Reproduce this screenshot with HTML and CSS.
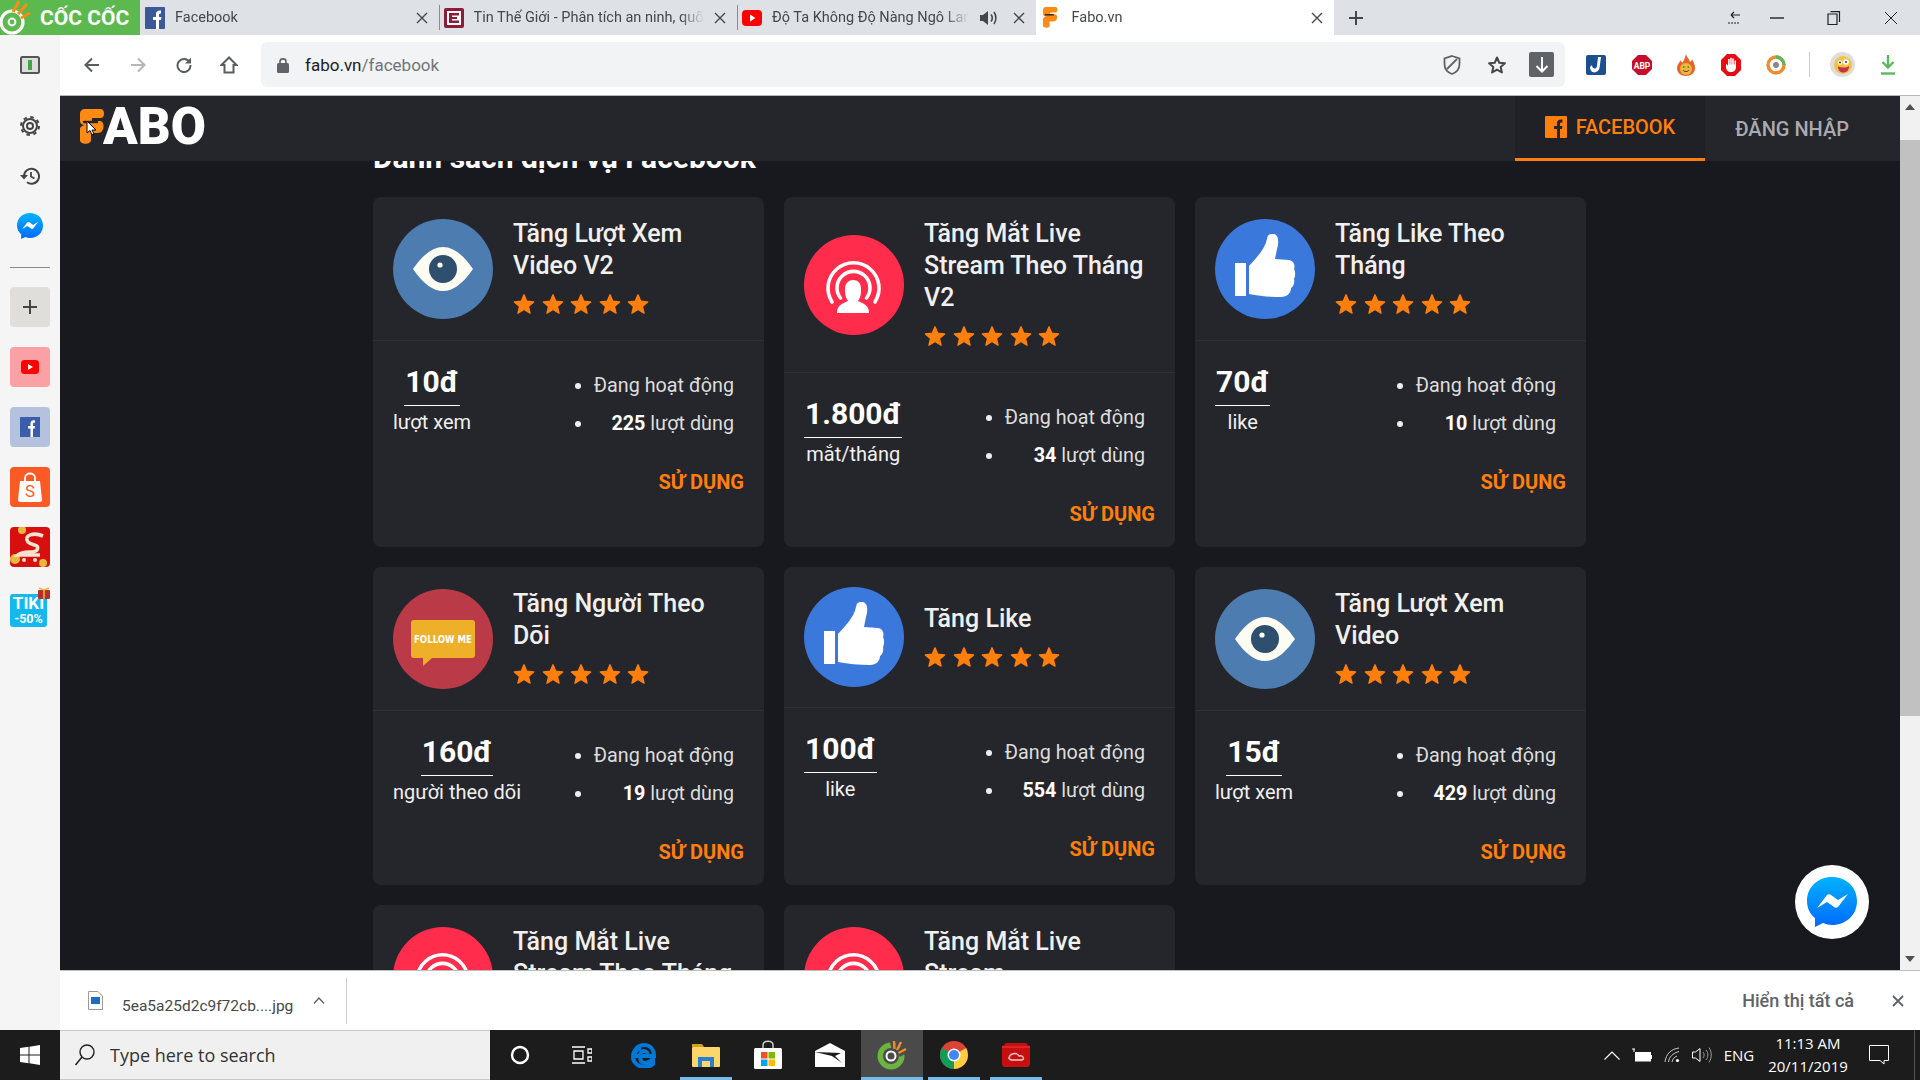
FILE: index.html
```html
<!DOCTYPE html>
<html lang="vi">
<head>
    <meta charset="UTF-8">
    <title>Fabo.vn</title>
    <link rel="stylesheet" href="styles.css">
</head>
<body>

<!-- shared icons -->
<svg class="defs" width="0" height="0">
    <defs>
        <linearGradient id="msgr-blue" x1="0" y1="0" x2="0" y2="1"><stop offset="0" stop-color="#00b2ff"/><stop offset="1" stop-color="#006aff"/></linearGradient>
    </defs>
    <symbol id="star" viewBox="0 0 24 24"><polygon points="12,2 15,9 22.5,9.7 16.8,14.6 18.6,22 12,18 5.4,22 7.2,14.6 1.5,9.7 9,9" fill="#ff7f0c" stroke="#ff7f0c" stroke-width="1.5" stroke-linejoin="round"/></symbol>
    <symbol id="eye" viewBox="0 0 100 100">
        <circle cx="50" cy="50" r="50" fill="#4d7cb1"/>
        <path d="M20 50Q35 28 50 28T80 50Q65 72 50 72T20 50Z" fill="#fdfcf2"/>
        <circle cx="50" cy="50" r="14" fill="#2e4f6e"/>
        <circle cx="47" cy="46" r="2.6" fill="#fff"/>
    </symbol>
    <symbol id="live" viewBox="0 0 100 100">
        <circle cx="50" cy="50" r="50" fill="#ff2d4b"/>
        <path d="M28 67A25.5 25.5 0 1 1 71 67M36.5 63A16.5 16.5 0 1 1 62.5 63" fill="none" stroke="#fff" stroke-width="3.6" stroke-linecap="round"/>
        <path d="M33 78C33 70 38 69 44 66C41 62 41 58 41 54C41 48 45 45 49 45C54 45 57 48 57 54C57 58 57 62 54 66C60 69 65 70 65 78Z" fill="#fff"/>
    </symbol>
    <symbol id="like" viewBox="0 0 100 100">
        <circle cx="50" cy="50" r="50" fill="#3b78db"/>
        <rect x="20" y="44" width="11" height="33" fill="#fff"/>
        <path d="M34 47C42 38 50 30 52 20C53 14 56 15 59 15C64 16 64 24 62 30L60 40L74 41C80 42 80 48 79 50C81 54 80 58 79 60C80 64 78 68 76 69C76 74 72 78 66 78C55 78 44 77 34 75Z" fill="#fff"/>
    </symbol>
    <symbol id="fabo-f" viewBox="0 0 25 35">
        <path d="M5 0H21C25 0 25 9 21 9H12V12H20C25 12 25 24 18 24H11V31C11 36 0 36 0 31V20C0 18 3 16 6 16C1 16 0 14 0 11V5C0 2 2 0 5 0Z" fill="#ff8a14"/>
        <path d="M3 13H18" stroke="#25262b" stroke-width="2.4"/>
    </symbol>
    <symbol id="close" viewBox="0 0 12 12"><path d="M1 1L11 11M11 1L1 11" stroke="#45474a" stroke-width="1.4" fill="none"/></symbol>
    <symbol id="msgr" viewBox="0 0 50 50">
        <path d="M25 0C11 0 0 10 0 24C0 31 3 37 8 41V50L16 46C19 47 22 48 25 48C39 48 50 38 50 24C50 10 39 0 25 0Z" fill="url(#msgr-blue)"/>
        <path d="M10 31L20 18C21 17 23 17 24 18L31 23L41 17L31 30C30 31 28 31 27 30L20 25Z" fill="#fff"/>
    </symbol>
</svg>

<div class="tabstrip">
    <div class="brand">
        <svg width="36" height="35" viewBox="0 0 36 35"><circle cx="12" cy="22" r="11" fill="none" stroke="#fff" stroke-width="3.2"/><circle cx="12" cy="22" r="3.400" fill="none" stroke="#fff" stroke-width="2"/><path d="M13 12L19 1M18 14L27 4M21 18L30 13" stroke="#ff8a14" stroke-width="3"/></svg>
        <span class="brand-name">CỐC CỐC</span>
    </div>
    <div class="tab">
        <svg class="favicon" width="20" height="22" viewBox="0 0 20 22"><rect width="20" height="22" rx="1" fill="#3b5998"/><path d="M11 22V13H8V10H11V7C11 4.500 13 3 16 3.500V6.500C14.500 6.300 14 6.800 14 8V10H16.500L16 13H14V22Z" fill="#fff"/></svg>
        <span class="tab-title">Facebook</span>
        <svg class="tab-x" width="12" height="12"><use href="#close"/></svg>
    </div>
    <div class="tab">
        <svg class="favicon" width="20" height="20" viewBox="0 0 20 20"><rect width="20" height="20" rx="2" fill="#8c1d35"/><rect x="3" y="3" width="14" height="14" fill="#fff"/><path d="M5 5H15V7.500H8V9H13V11H8V12.500H15V15H5Z" fill="#8c1d35"/></svg>
        <span class="tab-title">Tin Thế Giới - Phân tích an ninh, quốc phòng</span>
        <svg class="tab-x" width="12" height="12"><use href="#close"/></svg>
    </div>
    <div class="tab">
        <svg class="favicon" width="20" height="16" viewBox="0 0 20 16"><rect width="20" height="16" rx="4" fill="#f00"/><path d="M8 4.500L13.500 8L8 11.500Z" fill="#fff"/></svg>
        <span class="tab-title">Độ Ta Không Độ Nàng Ngô Lan Hương</span>
        <svg class="tab-sound" width="20" height="18" viewBox="0 0 20 18"><path d="M1 6H4L9 2V16L4 12H1Z" fill="#45474a"/><path d="M12 5.500C13.500 7.500 13.500 10.500 12 12.500M15 3C17.500 6.500 17.500 11.500 15 15" fill="none" stroke="#45474a" stroke-width="1.6"/></svg>
        <svg class="tab-x" width="12" height="12"><use href="#close"/></svg>
    </div>
    <div class="tab tab-active">
        <svg class="favicon" width="15" height="21"><use href="#fabo-f"/></svg>
        <span class="tab-title">Fabo.vn</span>
        <svg class="tab-x" width="12" height="12"><use href="#close"/></svg>
    </div>
    <svg class="tab-plus" width="14" height="14" viewBox="0 0 14 14"><path d="M7 0V14M0 7H14" stroke="#45474a" stroke-width="2"/></svg>
    <div class="win-btns">
        <span class="win-btn win-back"><svg width="14" height="14" viewBox="0 0 14 14"><path d="M4 4H13M4 4L7 1M4 4L7 7" fill="none" stroke="#222" stroke-width="1.2"/><path d="M1 12H13" stroke="#222" stroke-width="1.200" stroke-dasharray="2 1"/></svg></span>
        <span class="win-btn win-min"><svg width="14" height="2"><path d="M0 1H14" stroke="#222" stroke-width="1.400"/></svg></span>
        <span class="win-btn win-max"><svg width="14" height="14" viewBox="0 0 14 14"><path d="M3.500 .7H12.500V11M1 3H10V13.500H1Z" fill="none" stroke="#222" stroke-width="1.200"/></svg></span>
        <span class="win-btn win-close"><svg width="14" height="14" viewBox="0 0 14 14"><path d="M1 1L13 13M13 1L1 13" stroke="#222" stroke-width="1"/></svg></span>
    </div>
</div>

<div class="window">
    <aside class="sidebar">
        <div class="side-toggle"><svg width="20" height="18" viewBox="0 0 20 18"><rect x="1" y="1" width="18" height="16" rx="1.500" fill="#ddd" stroke="#555" stroke-width="2"/><rect x="8" y="4" width="4" height="10" fill="#3fa73f"/></svg></div>
        <div class="side-tool"><svg width="20" height="20" viewBox="0 0 20 20"><circle cx="10" cy="10" r="3" fill="none" stroke="#444" stroke-width="2"/><circle cx="10" cy="10" r="7" fill="none" stroke="#444" stroke-width="2"/><circle cx="10" cy="10" r="9" fill="none" stroke="#444" stroke-width="2" stroke-dasharray="3.500 3.570"/></svg></div>
        <div class="side-tool"><svg width="20" height="18" viewBox="0 0 20 18"><path d="M4 9A7.500 7.500 0 1 1 7 15.300" fill="none" stroke="#444" stroke-width="2"/><path d="M0 8H8L4 12.500Z" fill="#444"/><path d="M11 5V9.500L14.500 11.500" fill="none" stroke="#444" stroke-width="1.800"/></svg></div>
        <div class="side-tool"><svg width="26" height="26"><use href="#msgr"/></svg></div>
        <div class="side-line"></div>
        <div class="side-app side-add"><svg width="16" height="16" viewBox="0 0 16 16"><path d="M8 1V15M1 8H15" stroke="#444" stroke-width="2"/></svg></div>
        <div class="side-app side-yt"><svg width="18" height="14" viewBox="0 0 18 14"><rect width="18" height="14" rx="3.500" fill="#f00"/><path d="M7 4L12 7L7 10Z" fill="#fff"/></svg></div>
        <div class="side-app side-fb"><svg width="20" height="20" viewBox="0 0 20 20"><rect width="20" height="20" fill="#3b5eaa"/><path d="M10.500 20V11.500H8V9H10.500V6.500C10.500 4 12.500 3 15 3.400V5.700C13.500 5.500 13 6 13 7V9H15L14.700 11.500H13V20Z" fill="#fff"/></svg></div>
        <div class="side-app side-shopee"><svg width="26" height="30" viewBox="0 0 26 30"><path d="M3 9H23L25 28C25 29 24 30 23 30H3C2 30 1 29 1 28Z" fill="#fff"/><path d="M8 9V6C8 0 18 0 18 6V9" fill="none" stroke="#fff" stroke-width="1.800"/><text x="13" y="25" class="shopee-s">S</text></svg></div>
        <div class="side-app side-sendo"><svg width="40" height="40" viewBox="0 0 40 40"><circle cx="12" cy="3" r="4" fill="#e8b93c"/><circle cx="5" cy="32" r="5" fill="#e8b93c"/><circle cx="33" cy="36" r="4" fill="#e8b93c"/><path d="M33 9C24 5 13 8 18 15C22 19 30 17 27 23C24 27 14 23 8 28H30" fill="none" stroke="#f6e3cf" stroke-width="3.600"/><circle cx="14" cy="33" r="2" fill="#f6e3cf"/><circle cx="25" cy="33" r="2" fill="#f6e3cf"/></svg></div>
        <div class="side-app side-tiki">
            <div class="tiki-box">TIKI<small>-50%</small></div>
            <svg class="tiki-gift" width="12" height="12" viewBox="0 0 12 12"><rect y="3" width="12" height="9" rx="1" fill="#b92c2c"/><path d="M6 3V12M1 1L6 3L11 1" fill="none" stroke="#e8b93c" stroke-width="1.600"/></svg>
        </div>
    </aside>

    <div class="browser">
        <div class="toolbar">
            <svg class="nav-ico" width="16" height="16" viewBox="0 0 16 16"><path d="M15 8H2M8 1.500L1.500 8L8 14.500" fill="none" stroke="#5a5c60" stroke-width="2"/></svg>
            <svg class="nav-ico nav-fwd" width="16" height="16" viewBox="0 0 16 16"><path d="M1 8H14M8 1.500L14.500 8L8 14.500" fill="none" stroke="#b4b6b9" stroke-width="2"/></svg>
            <svg class="nav-ico nav-reload" width="16" height="16" viewBox="0 0 16 16"><path d="M13.500 5A6.500 6.500 0 1 0 14.500 8" fill="none" stroke="#5a5c60" stroke-width="2"/><path d="M15 .500V6.500H9Z" fill="#5a5c60"/></svg>
            <svg class="nav-ico nav-home" width="18" height="18" viewBox="0 0 18 18"><path d="M9 1.500L1.500 9H4.500V16.500H13.500V9H16.500Z" fill="none" stroke="#5a5c60" stroke-width="2"/></svg>
            <div class="omnibox">
                <svg width="12" height="16" viewBox="0 0 12 16"><path d="M3 7V4.500C3 1 9 1 9 4.500V7" fill="none" stroke="#5f6368" stroke-width="1.600"/><rect y="6" width="12" height="10" rx="1.500" fill="#5f6368"/></svg>
                <span class="url">fabo.vn<span class="url-path">/facebook</span></span>
                <span class="omni-end">
                    <svg width="18" height="20" viewBox="0 0 18 20"><path d="M9 1L16.500 3.500V9C16.500 14 13 17.500 9 19C5 17.500 1.500 14 1.500 9V3.500Z" fill="none" stroke="#5f6368" stroke-width="1.800"/><path d="M4 14L14 4" stroke="#5f6368" stroke-width="1.800"/></svg>
                    <svg width="20" height="20" viewBox="0 0 24 24"><polygon points="12,3 14.700,9.300 21.500,9.900 16.400,14.400 17.900,21 12,17.500 6.100,21 7.600,14.400 2.500,9.900 9.300,9.300" fill="none" stroke="#45474a" stroke-width="2.400" stroke-linejoin="round"/></svg>
                    <span class="omni-dl"><svg width="14" height="16" viewBox="0 0 14 16"><path d="M7 0V14M1.500 9L7 14.500L12.500 9" fill="none" stroke="#fff" stroke-width="2"/></svg></span>
                </span>
            </div>
            <div class="extensions">
                <svg width="20" height="20" viewBox="0 0 20 20"><rect width="20" height="20" rx="2" fill="#1c4f8f"/><path d="M12 2L11 11C10 15 6 14 6 10L4 12C4 19 12 19 13.500 13L15 2Z" fill="#fff"/></svg>
                <svg width="20" height="20" viewBox="0 0 20 20"><polygon points="6,0 14,0 20,6 20,14 14,20 6,20 0,14 0,6" fill="#c70d2c"/><text x="10" y="13.500" class="abp">ABP</text></svg>
                <svg width="18" height="22" viewBox="0 0 18 22"><path d="M9 0C10 4 12 4 13 8C15 6 15 6 15 5C17 9 18 11 18 14C18 19 14 22 9 22C4 22 0 19 0 14C0 11 2 9 4 6C4 8 5 9 6 8C7 6 8 3 9 0Z" fill="#e8632a"/><circle cx="9" cy="15" r="6" fill="#e8b93c"/><path d="M6 16C7 18 11 18 12 16" fill="none" stroke="#533" stroke-width="1"/><path d="M6 13H7.500M10.500 13H12" stroke="#533" stroke-width="1.200"/></svg>
                <svg width="20" height="22" viewBox="0 0 20 22"><polygon points="6,0 14,0 20,6 20,16 14,22 6,22 0,16 0,6" fill="#e60d12"/><path d="M5 10V13C5 16 7 18 10 18C13 18 15 16 15 13V6.500H13.500V10.500H12.800V4.500H11.200V10.500H10.700V3.700H9.200V10.500H8.700V5H7.100V12L5.500 10Z" fill="#fff"/></svg>
                <svg width="20" height="20" viewBox="0 0 20 20"><circle cx="10" cy="10" r="8" fill="none" stroke="#f28c28" stroke-width="3.400"/><path d="M10 2A8 8 0 0 1 18 10" fill="none" stroke="#5cb85c" stroke-width="3.400"/><circle cx="10" cy="10" r="3" fill="#888"/></svg>
                <span class="ext-sep"></span>
                <span class="ext-face"><svg width="18" height="18" viewBox="0 0 18 18"><circle cx="9" cy="9" r="9" fill="#f3c443"/><circle cx="6" cy="6.500" r="2.200" fill="#fff"/><circle cx="12" cy="6" r="2.800" fill="#fff"/><circle cx="6" cy="6.500" r="1" fill="#333"/><circle cx="12" cy="6" r="1" fill="#333"/><path d="M4 10.500C8 12 12 12 15 10C15 15 12 16.500 9 16.500C6 16.500 4 14 4 10.500Z" fill="#c4314b"/></svg></span>
                <svg class="ext-dl" width="14" height="20" viewBox="0 0 14 20"><path d="M7 0V12M1.500 7L7 12.500L12.500 7" fill="none" stroke="#5cb85c" stroke-width="2.400"/><path d="M0 18.500H14" stroke="#5cb85c" stroke-width="2.400"/></svg>
            </div>
        </div>

        <div class="viewport">
            <div class="page">
                <header class="site-header">
                    <a class="logo"><svg width="25" height="35"><use href="#fabo-f"/></svg><span>ABO</span></a>
                    <nav class="site-nav">
                        <a class="nav-item nav-active"><svg width="22" height="22" viewBox="0 0 22 22"><rect width="22" height="22" rx="1" fill="#ff7f0c"/><path d="M12 22V13H9V10H12V7C12 4.500 14 3 17.500 3.500V6.500C15.500 6.300 15 6.800 15 8V10H17.500L17 13H15V22Z" fill="#25262b"/></svg>FACEBOOK</a>
                        <a class="nav-item">ĐĂNG NHẬP</a>
                    </nav>
                </header>
                <main class="content">
                    <h1 class="heading">Danh sách dịch vụ Facebook</h1>
                    <div class="grid">

                        <article class="card">
                            <div class="card-top">
                                <svg class="card-ico"><use href="#eye"/></svg>
                                <div>
                                    <h3 class="card-title">Tăng Lượt Xem Video V2</h3>
                                    <div class="stars"><svg><use href="#star"/></svg><svg><use href="#star"/></svg><svg><use href="#star"/></svg><svg><use href="#star"/></svg><svg><use href="#star"/></svg></div>
                                </div>
                            </div>
                            <div class="card-body">
                                <div class="card-info">
                                    <div class="price"><b>10đ</b><span>lượt xem</span></div>
                                    <ul class="stats"><li><span>Đang hoạt động</span></li><li><span><b>225</b> lượt dùng</span></li></ul>
                                </div>
                                <a class="use-btn">SỬ DỤNG</a>
                            </div>
                        </article>

                        <article class="card">
                            <div class="card-top">
                                <svg class="card-ico"><use href="#live"/></svg>
                                <div>
                                    <h3 class="card-title">Tăng Mắt Live Stream Theo Tháng V2</h3>
                                    <div class="stars"><svg><use href="#star"/></svg><svg><use href="#star"/></svg><svg><use href="#star"/></svg><svg><use href="#star"/></svg><svg><use href="#star"/></svg></div>
                                </div>
                            </div>
                            <div class="card-body">
                                <div class="card-info">
                                    <div class="price"><b>1.800đ</b><span>mắt/tháng</span></div>
                                    <ul class="stats"><li><span>Đang hoạt động</span></li><li><span><b>34</b> lượt dùng</span></li></ul>
                                </div>
                                <a class="use-btn">SỬ DỤNG</a>
                            </div>
                        </article>

                        <article class="card">
                            <div class="card-top">
                                <svg class="card-ico"><use href="#like"/></svg>
                                <div>
                                    <h3 class="card-title">Tăng Like Theo Tháng</h3>
                                    <div class="stars"><svg><use href="#star"/></svg><svg><use href="#star"/></svg><svg><use href="#star"/></svg><svg><use href="#star"/></svg><svg><use href="#star"/></svg></div>
                                </div>
                            </div>
                            <div class="card-body">
                                <div class="card-info">
                                    <div class="price"><b>70đ</b><span>like</span></div>
                                    <ul class="stats"><li><span>Đang hoạt động</span></li><li><span><b>10</b> lượt dùng</span></li></ul>
                                </div>
                                <a class="use-btn">SỬ DỤNG</a>
                            </div>
                        </article>

                        <article class="card">
                            <div class="card-top">
                                <svg class="card-ico" viewBox="0 0 100 100">
                                    <circle cx="50" cy="50" r="50" fill="#bb3a48"/>
                                    <path d="M21 31H79C81 31 82 32 82 34V66C82 68 81 69 79 69H39L30 77V69H21C19 69 18 68 18 66V34C18 32 19 31 21 31Z" fill="#eeb029"/>
                                    <text x="50" y="54" class="follow-me" textLength="58" lengthAdjust="spacingAndGlyphs">FOLLOW ME</text>
                                </svg>
                                <div>
                                    <h3 class="card-title">Tăng Người Theo Dõi</h3>
                                    <div class="stars"><svg><use href="#star"/></svg><svg><use href="#star"/></svg><svg><use href="#star"/></svg><svg><use href="#star"/></svg><svg><use href="#star"/></svg></div>
                                </div>
                            </div>
                            <div class="card-body">
                                <div class="card-info">
                                    <div class="price"><b>160đ</b><span>người theo dõi</span></div>
                                    <ul class="stats"><li><span>Đang hoạt động</span></li><li><span><b>19</b> lượt dùng</span></li></ul>
                                </div>
                                <a class="use-btn">SỬ DỤNG</a>
                            </div>
                        </article>

                        <article class="card">
                            <div class="card-top">
                                <svg class="card-ico"><use href="#like"/></svg>
                                <div>
                                    <h3 class="card-title">Tăng Like</h3>
                                    <div class="stars"><svg><use href="#star"/></svg><svg><use href="#star"/></svg><svg><use href="#star"/></svg><svg><use href="#star"/></svg><svg><use href="#star"/></svg></div>
                                </div>
                            </div>
                            <div class="card-body">
                                <div class="card-info">
                                    <div class="price"><b>100đ</b><span>like</span></div>
                                    <ul class="stats"><li><span>Đang hoạt động</span></li><li><span><b>554</b> lượt dùng</span></li></ul>
                                </div>
                                <a class="use-btn">SỬ DỤNG</a>
                            </div>
                        </article>

                        <article class="card">
                            <div class="card-top">
                                <svg class="card-ico"><use href="#eye"/></svg>
                                <div>
                                    <h3 class="card-title">Tăng Lượt Xem Video</h3>
                                    <div class="stars"><svg><use href="#star"/></svg><svg><use href="#star"/></svg><svg><use href="#star"/></svg><svg><use href="#star"/></svg><svg><use href="#star"/></svg></div>
                                </div>
                            </div>
                            <div class="card-body">
                                <div class="card-info">
                                    <div class="price"><b>15đ</b><span>lượt xem</span></div>
                                    <ul class="stats"><li><span>Đang hoạt động</span></li><li><span><b>429</b> lượt dùng</span></li></ul>
                                </div>
                                <a class="use-btn">SỬ DỤNG</a>
                            </div>
                        </article>

                        <article class="card">
                            <div class="card-top">
                                <svg class="card-ico"><use href="#live"/></svg>
                                <div>
                                    <h3 class="card-title">Tăng Mắt Live Stream Theo Tháng</h3>
                                    <div class="stars"><svg><use href="#star"/></svg><svg><use href="#star"/></svg><svg><use href="#star"/></svg><svg><use href="#star"/></svg><svg><use href="#star"/></svg></div>
                                </div>
                            </div>
                        </article>

                        <article class="card">
                            <div class="card-top">
                                <svg class="card-ico"><use href="#live"/></svg>
                                <div>
                                    <h3 class="card-title">Tăng Mắt Live Stream</h3>
                                    <div class="stars"><svg><use href="#star"/></svg><svg><use href="#star"/></svg><svg><use href="#star"/></svg><svg><use href="#star"/></svg><svg><use href="#star"/></svg></div>
                                </div>
                            </div>
                        </article>

                    </div>
                </main>
            </div>
            <div class="scrollbar">
                <span class="sb-btn"><i class="sb-up"></i></span>
                <span class="sb-thumb"></span>
                <span class="sb-btn sb-end"><i class="sb-down"></i></span>
            </div>
            <a class="chat-btn"><svg width="50" height="50"><use href="#msgr"/></svg></a>
            <svg class="cursor" width="12" height="16" viewBox="0 0 12 16"><path d="M1 1V13L4 10.500L6 15L8 14L6 10H10Z" fill="#fff" stroke="#000"/></svg>
        </div>

        <div class="download-bar">
            <svg width="15" height="19" viewBox="0 0 15 19"><path d="M.5 .5H10L14.500 5V18.500H.5Z" fill="#fff" stroke="#999"/><rect x="3" y="6" width="9" height="7" fill="#1b6fc2"/></svg>
            <span class="dl-name">5ea5a25d2c9f72cb....jpg</span>
            <svg class="dl-caret" width="12" height="7" viewBox="0 0 12 7"><path d="M1 6.500L6 1L11 6.500" fill="none" stroke="#5f6368" stroke-width="1.400"/></svg>
            <span class="dl-sep"></span>
            <span class="dl-all">Hiển thị tất cả</span>
            <svg class="dl-close" width="12" height="12" viewBox="0 0 12 12"><path d="M1 1L11 11M11 1L1 11" stroke="#5f6368" stroke-width="1.800"/></svg>
        </div>
    </div>
</div>

<footer class="taskbar">
    <div class="start"><svg width="20" height="20" viewBox="0 0 20 20"><path d="M0 3L8.500 1.800V9.500H0ZM9.500 1.700L20 0V9.500H9.500ZM0 10.500H8.500V18.200L0 17ZM9.500 10.500H20V20L9.500 18.300Z" fill="#fff"/></svg></div>
    <div class="search">
        <svg width="22" height="24" viewBox="0 0 22 24"><circle cx="13" cy="9" r="7" fill="none" stroke="#222" stroke-width="1.400"/><path d="M8 14L1.500 22" stroke="#222" stroke-width="1.600"/></svg>
        <span>Type here to search</span>
    </div>
    <div class="task-items">
        <div class="task"><svg width="20" height="20" viewBox="0 0 20 20"><circle cx="10" cy="10" r="8" fill="none" stroke="#fff" stroke-width="2.400"/></svg></div>
        <div class="task"><svg width="20" height="20" viewBox="0 0 20 20"><path d="M0 2H13M0 18H13M2 6H11V14H2ZM16 4H20V8H16ZM16 12H20V16H16Z" fill="none" stroke="#fff" stroke-width="1.300"/></svg></div>
        <div class="task"><svg width="26" height="26" viewBox="0 0 26 26"><path d="M3 16C3 10 6 7 10 6M4 14H23C23 7 19 3 13 3C7 3 2 8 2 15C2 21 8 25 13 25C17 25 20 24 22 22V17C19 20 16 21 14 21C11 21 9 19 9 14M9 14C9 11 11 9 13 9C15 9 17 11 17 14" fill="none" stroke="#0078d7" stroke-width="4"/></svg></div>
        <div class="task task-open"><svg width="28" height="26" viewBox="0 0 28 26"><path d="M0 2H10L12 5H0Z" fill="#d99e1d"/><rect y="5" width="28" height="20" rx="1" fill="#fcd669"/><path d="M6 25V15H22V25H18V19H10V25Z" fill="#2a7fd5"/></svg></div>
        <div class="task"><svg width="30" height="30" viewBox="0 0 30 30"><path d="M10 8V5C10 0 20 0 20 5V8" fill="none" stroke="#ccc" stroke-width="1.500"/><rect x="1" y="8" width="28" height="21" rx="1.500" fill="#fff"/><rect x="8" y="12" width="6.500" height="6.500" fill="#f25022"/><rect x="15.500" y="12" width="6.500" height="6.500" fill="#7fba00"/><rect x="8" y="19.500" width="6.500" height="6.500" fill="#00a4ef"/><rect x="15.500" y="19.500" width="6.500" height="6.500" fill="#ffb900"/></svg></div>
        <div class="task"><svg width="30" height="24" viewBox="0 0 30 24"><path d="M0 8L15 0L30 8V24H0Z" fill="#fff"/><path d="M0 9L26 10L20 13L27 20L17 13Z" fill="#1b1b1b"/></svg></div>
        <div class="task task-open task-active"><svg width="30" height="30" viewBox="0 0 30 30"><circle cx="14" cy="16" r="13.500" fill="#6cb33f"/><circle cx="14" cy="16" r="8" fill="#4a4a4a"/><circle cx="14" cy="16" r="4.500" fill="none" stroke="#fff" stroke-width="2"/><path d="M15 2L17 10M21 1L19 10M29 5L20 12M29 11L22 15" stroke="#4a4a4a" stroke-width="4"/><path d="M17 1L17.500 9M24 2L20 10M29 9L21.500 13" stroke="#f28c28" stroke-width="2.400"/></svg></div>
        <div class="task task-open"><svg width="28" height="28" viewBox="0 0 28 28"><circle cx="14" cy="14" r="14" fill="#db4437"/><path d="M14 14L26.100 7A14 14 0 0 1 14 28Z" fill="#ffcd40"/><path d="M14 14L14 28A14 14 0 0 1 1.900 7Z" fill="#0f9d58"/><circle cx="14" cy="14" r="6.500" fill="#fff"/><circle cx="14" cy="14" r="5" fill="#4285f4"/></svg></div>
        <div class="task task-open"><svg width="28" height="24" viewBox="0 0 28 24"><path d="M4 0H24L28 4V22L26 24H2L0 22V4Z" fill="#c80f10"/><path d="M0 4H28" stroke="#e52e2e" stroke-width="1.500"/><path d="M7 16C7 10 15 9 17 13C21 12 23 16 20 17H10C8 17 7 16 7 14" fill="none" stroke="#f4c9c9" stroke-width="1.400"/></svg></div>
    </div>
    <div class="tray">
        <span class="tray-ico"><svg width="16" height="9" viewBox="0 0 16 9"><path d="M.5 8.500L8 1L15.500 8.500" fill="none" stroke="#fff" stroke-width="1.200"/></svg></span>
        <span class="tray-ico"><svg width="20" height="14" viewBox="0 0 20 14"><path d="M0 1H3M2 1V4" stroke="#fff"/><rect x="3" y="4" width="16" height="9.500" fill="#fff"/><rect x="19" y="7" width="1" height="4" fill="#fff"/></svg></span>
        <span class="tray-ico"><svg width="16" height="16" viewBox="0 0 16 16"><circle cx="13.500" cy="13.500" r="1.600" fill="#fff"/><path d="M1 15C2 7 7 2 15 1M4.500 15C5 10 9 6 15 4.500M8 15C8.500 12 10.500 10 13 9" fill="none" stroke="#ccc" stroke-width="1"/></svg></span>
        <span class="tray-ico"><svg width="20" height="16" viewBox="0 0 20 16"><path d="M.5 5H3.500L8 1.500V14.500L3.500 11H.5Z" fill="none" stroke="#fff"/><path d="M11 5C12.500 7 12.500 9 11 11M14 3C16.500 6 16.500 10 14 13M17 .5C20 5 20 11 17 15.500" fill="none" stroke="#999"/></svg></span>
        <span class="tray-lang">ENG</span>
        <span class="tray-clock"><span>11:13 AM</span><span>20/11/2019</span></span>
        <span class="tray-notif"><svg width="20" height="20" viewBox="0 0 20 20"><path d="M.5 .5H19.500V15.500H15V19L11 15.500H.5Z" fill="none" stroke="#fff"/></svg></span>
        <span class="show-desktop"></span>
    </div>
</footer>

</body>
</html>
```

FILE: styles.css
```css
* {
    margin: 0;
    padding: 0;
    box-sizing: border-box;
}
html, body {
    width: 1920px;
    height: 1080px;
    overflow: hidden;
}
body {
    display: flex;
    flex-direction: column;
    font-family: Roboto, "Liberation Sans", sans-serif;
    background: #fff;
}
.defs {
    position: absolute;
}
svg {
    display: block;
    flex: none;
}

/* tab strip */
.tabstrip {
    height: 35px;
    display: flex;
    align-items: center;
    background: #dee1e6;
    font-size: 14.5px;
    color: #45474a;
}
.brand {
    width: 140px;
    height: 35px;
    display: flex;
    align-items: center;
    gap: 4px;
    background: #5cb94f;
}
.brand-name {
    color: #fff;
    font-size: 21px;
    font-weight: 700;
    white-space: nowrap;
}
.tab {
    width: 298.5px;
    height: 35px;
    display: flex;
    align-items: center;
    gap: 10px;
    padding: 0 11px 0 5px;
    position: relative;
}
.tab + .tab::before {
    content: "";
    position: absolute;
    left: 0;
    top: 5px;
    bottom: 5px;
    width: 1px;
    background: #8a8c90;
}
.tab-active + .tab::before,
.tab-active::before {
    display: none;
}
.tab-active {
    background: #fff;
    padding-left: 7px;
    gap: 14px;
}
.tab-title {
    flex: 1;
    min-width: 0;
    white-space: nowrap;
    overflow: hidden;
    -webkit-mask-image: linear-gradient(to left, transparent, #000 24px);
    mask-image: linear-gradient(to left, transparent, #000 24px);
}
.tab-sound {
    margin-right: 4px;
}
.tab-plus {
    margin-left: 15px;
}
.win-btns {
    margin-left: auto;
    display: flex;
    height: 35px;
}
.win-btn {
    display: flex;
    align-items: center;
    justify-content: center;
}
.win-back { width: 30px; }
.win-min { width: 56px; }
.win-max { width: 57px; }
.win-close { width: 58px; }

/* window */
.window {
    flex: 1;
    min-height: 0;
    display: flex;
}
.sidebar {
    width: 60px;
    flex: none;
    display: flex;
    flex-direction: column;
    align-items: center;
    background: #f5f5f5;
}
.side-toggle {
    height: 60px;
    margin-bottom: 6px;
    display: flex;
    align-items: center;
}
.side-tool {
    height: 50px;
    display: flex;
    align-items: center;
}
.side-line {
    width: 40px;
    height: 1px;
    background: #8a8a8a;
    margin: 16px 0 19px;
}
.side-app {
    width: 40px;
    height: 40px;
    margin-bottom: 20px;
    border-radius: 4px;
    display: flex;
    align-items: center;
    justify-content: center;
    overflow: hidden;
    position: relative;
}
.side-add { background: #dfdedb; }
.side-yt { background: #fba0a5; }
.side-fb { background: #b4c2dd; }
.side-shopee { background: #fb5a25; }
.side-sendo { background: #d80f0f; }
.side-tiki {
    overflow: visible;
    display: block;
}
.tiki-box {
    width: 37px;
    height: 33px;
    margin-top: 7px;
    border-radius: 3px;
    background: #14b8ee;
    color: #fff;
    font-size: 17px;
    line-height: 17px;
    font-weight: 700;
    text-align: center;
    padding-top: 1px;
}
.tiki-box small {
    display: block;
    font-size: 12.5px;
    line-height: 13px;
}
.tiki-gift {
    position: absolute;
    right: 0;
    top: 0;
}
.shopee-s {
    fill: #fb5a25;
    font-size: 17px;
    text-anchor: middle;
}

.browser {
    flex: 1;
    min-width: 0;
    display: flex;
    flex-direction: column;
}

/* toolbar */
.toolbar {
    height: 61px;
    flex: none;
    display: flex;
    align-items: center;
    background: #fff;
    border-bottom: 1px solid #b8b8b8;
    padding: 0 0 1px 24px;
}
.nav-ico { margin-right: 30px; }
.nav-reload { margin-right: 28px; }
.nav-home { margin-right: 23px; }
.omnibox {
    width: 1304px;
    height: 45px;
    flex: none;
    display: flex;
    align-items: center;
    gap: 16px;
    padding-left: 16px;
    background: #f1f3f4;
    border-radius: 6px;
}
.url {
    font-size: 17px;
    color: #202124;
}
.url-path {
    color: #70757a;
}
.omni-end {
    margin-left: auto;
    display: flex;
    align-items: center;
    gap: 26px;
    padding-right: 10px;
}
.omni-dl {
    width: 25px;
    height: 25px;
    margin-left: -4px;
    margin-right: 1px;
    border-radius: 2px;
    background: #5f6368;
    display: flex;
    align-items: center;
    justify-content: center;
}
.extensions {
    flex: 1;
    display: flex;
    align-items: center;
    padding-left: 21px;
    gap: 25.5px;
}
.abp {
    fill: #fff;
    font-size: 8.5px;
    font-weight: 700;
    text-anchor: middle;
}
.ext-sep {
    width: 1px;
    height: 25px;
    background: #ccc;
    margin-left: -3px;
}
.ext-face {
    width: 25px;
    height: 25px;
    margin: 0 -2px 0 -5px;
    border-radius: 50%;
    background: #ddd;
    display: flex;
    align-items: center;
    justify-content: center;
}
.ext-dl {
    margin-left: 2px;
}

/* page */
.viewport {
    flex: 1;
    min-height: 0;
    display: flex;
    position: relative;
}
.page {
    flex: 1;
    min-width: 0;
    display: flex;
    flex-direction: column;
    background: #18191e;
}
.site-header {
    height: 65px;
    flex: none;
    display: flex;
    align-items: center;
    background: #25262b;
    padding: 0 21px 0 20px;
    position: relative;
}
.logo {
    display: flex;
    align-items: center;
    margin-bottom: 4px;
    color: #fff;
    font-size: 51px;
    font-weight: 900;
    line-height: 1;
}
.logo span {
    margin-left: -2px;
}
.site-nav {
    margin-left: auto;
    display: flex;
    height: 65px;
}
.nav-item {
    display: flex;
    align-items: center;
    gap: 9px;
    padding: 0 30px;
    font-size: 20px;
    font-weight: 500;
    color: #a9abb0;
}
.nav-active {
    color: #ff7f0c;
    background: #202126;
    border-bottom: 3px solid #ff7f0c;
}
.content {
    flex: 1;
    min-height: 0;
    overflow: hidden;
    padding-left: 313px;
}
.heading {
    margin-top: -23px;
    margin-bottom: 19px;
    font-size: 30px;
    line-height: 40px;
    font-weight: 700;
    color: #fff;
}
.grid {
    display: grid;
    grid-template-columns: repeat(3, 391px);
    gap: 20px;
}
.card {
    background: #25262b;
    border-radius: 8px;
    color: #fff;
}
.card-top {
    display: flex;
    align-items: center;
    gap: 20px;
    padding: 20px;
    border-bottom: 1px solid #2f3036;
}
.card-ico {
    width: 100px;
    height: 100px;
}
.card-title {
    padding-top: 1px;
    font-size: 25px;
    line-height: 32px;
    font-weight: 500;
    color: #f0f0f0;
}
.stars {
    display: flex;
    gap: 6.6px;
    margin: 11px 0 5px;
}
.stars svg {
    width: 22px;
    height: 22px;
}
.follow-me {
    fill: #fff;
    font-size: 11px;
    font-weight: 700;
    text-anchor: middle;
    font-family: "DejaVu Sans", sans-serif;
}
.card-body {
    padding: 20px 20px 21px;
}
.card-info {
    display: flex;
    justify-content: space-between;
    padding-right: 10px;
}
.price {
    display: flex;
    flex-direction: column;
    align-items: center;
    font-size: 20px;
}
.price b {
    font-size: 30px;
    line-height: 42px;
    padding: 0 1px 2px;
    border-bottom: 1px solid #fff;
    margin-bottom: 4px;
}
.price span {
    line-height: 24px;
    color: #f0f0f0;
}
.stats {
    list-style: none;
    width: 159px;
    margin: 6px 0 0;
    font-size: 19.75px;
    line-height: 38px;
    color: #ddd;
}
.stats li {
    display: flex;
    align-items: center;
    justify-content: space-between;
}
.stats li::before {
    content: "";
    width: 6px;
    height: 6px;
    border-radius: 50%;
    background: #eee;
}
.stats b {
    color: #fff;
}
.use-btn {
    display: block;
    margin-top: 27px;
    text-align: right;
    font-size: 20px;
    line-height: 24px;
    font-weight: 700;
    color: #ff7f0c;
}

/* scrollbar */
.scrollbar {
    width: 20px;
    flex: none;
    display: flex;
    flex-direction: column;
    background: #f1f1f1;
}
.sb-btn {
    height: 22px;
    flex: none;
    display: flex;
    align-items: center;
    justify-content: center;
}
.sb-up, .sb-down {
    width: 0;
    height: 0;
    border-left: 5px solid transparent;
    border-right: 5px solid transparent;
}
.sb-up { border-bottom: 6px solid #505050; }
.sb-down { border-top: 6px solid #505050; }
.sb-thumb {
    height: 576px;
    margin-top: 22px;
    background: #c1c1c1;
}
.sb-end {
    margin-top: auto;
}
.chat-btn {
    position: absolute;
    right: 51px;
    bottom: 31px;
    width: 74px;
    height: 74px;
    border-radius: 50%;
    background: #fff;
    display: flex;
    align-items: center;
    justify-content: center;
}
.cursor {
    position: absolute;
    left: 26px;
    top: 24px;
}

/* download bar */
.download-bar {
    height: 60px;
    flex: none;
    display: flex;
    align-items: center;
    background: #fff;
    border-top: 1px solid #bfbfbf;
    padding: 0 16px 0 28px;
    font-size: 15.5px;
    color: #45474a;
}
.dl-name {
    margin-left: 19px;
    padding-top: 10px;
}
.dl-caret {
    margin-left: 20px;
}
.dl-sep {
    width: 1px;
    height: 46px;
    background: #ccc;
    margin-left: 21px;
}
.dl-all {
    margin-left: auto;
    font-size: 18px;
    font-weight: 500;
    color: #5f6368;
}
.dl-close {
    margin-left: 38px;
}

/* taskbar */
.taskbar {
    height: 50px;
    flex: none;
    display: flex;
    background: #1c1c1c;
    color: #fff;
}
.start {
    width: 60px;
    display: flex;
    align-items: center;
    justify-content: center;
}
.search {
    width: 430px;
    display: flex;
    align-items: center;
    gap: 14px;
    padding-left: 14px;
    background: #f0f0f0;
    border-top: 1px solid #c8c8c8;
    border-bottom: 1px solid #c8c8c8;
    color: #333;
    font-size: 18px;
    font-family: "Open Sans", sans-serif;
}
.task-items {
    display: flex;
    margin-left: -1.5px;
}
.task {
    width: 62px;
    display: flex;
    align-items: center;
    justify-content: center;
    position: relative;
}
.task-open::after {
    content: "";
    position: absolute;
    left: 5px;
    right: 5px;
    bottom: 0;
    height: 3px;
    background: #76b9ed;
}
.task-active {
    background: #4a4a4a;
}
.task-active::after {
    left: 0;
    right: 0;
}
.tray {
    margin-left: auto;
    display: flex;
    align-items: center;
    height: 50px;
    font-family: "Open Sans", sans-serif;
    font-size: 15px;
}
.tray-ico {
    width: 30px;
    display: flex;
    justify-content: center;
}
.tray-lang {
    width: 44px;
    text-align: center;
}
.tray-clock {
    width: 94px;
    display: flex;
    flex-direction: column;
    align-items: center;
    line-height: 23px;
}
.tray-notif {
    width: 48px;
    display: flex;
    justify-content: center;
}
.show-desktop {
    width: 6px;
    height: 50px;
    margin-left: 11px;
    border-left: 1px solid #555;
}
```
